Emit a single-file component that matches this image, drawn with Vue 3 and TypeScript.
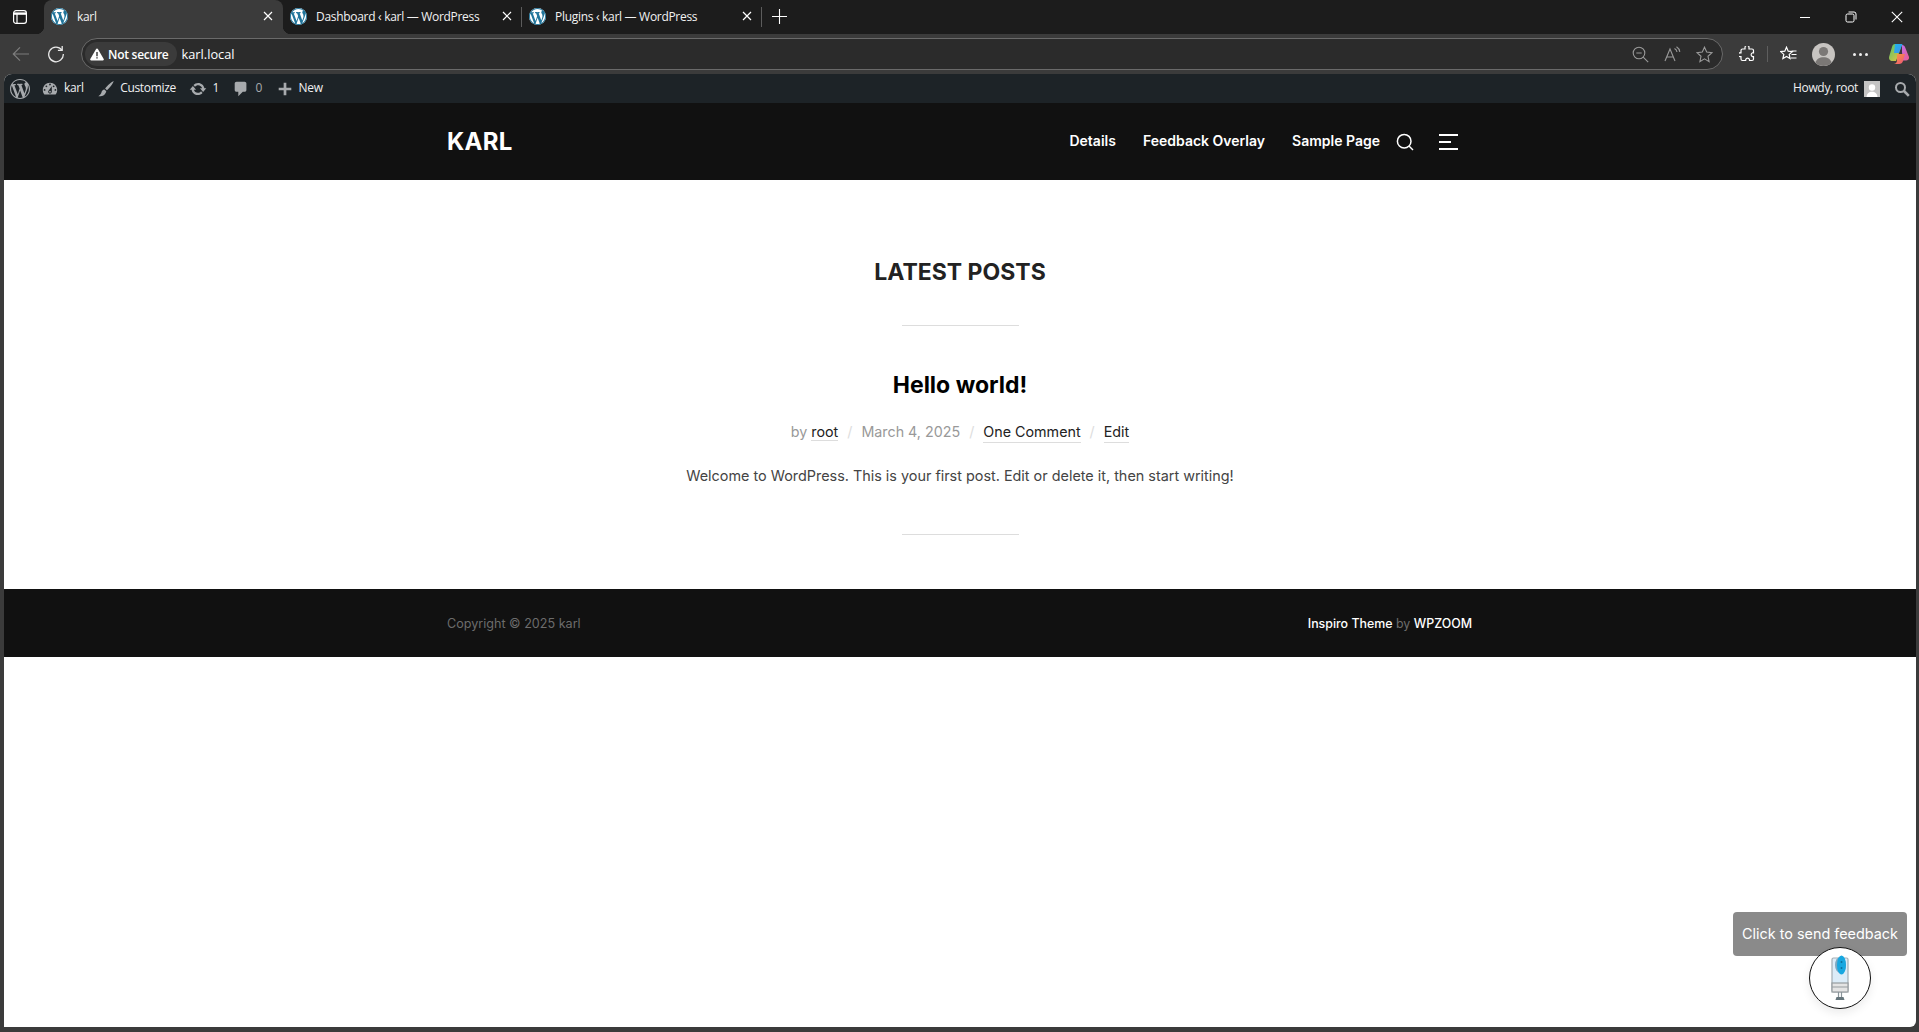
<template>
  <div class="browser">
    <div class="tabstrip">
      <div class="sidebar-btn">
        <svg width="16" height="16" viewBox="0 0 16 16" fill="none" stroke="#fff" stroke-width="1.2">
          <rect x="1.6" y="1.6" width="12.8" height="12.8" rx="2.4" />
          <path d="M2 4.600h12" stroke-width="2.4" />
          <path d="M5 5v9" />
        </svg>
      </div>
      <div v-for="(tab, i) in tabs" :key="tab.title" class="tab" :class="{ active: i === 0 }">
        <svg class="tab-logo" width="17" height="17" viewBox="0 0 20 20">
          <circle cx="10" cy="10" r="10" fill="#fff" />
          <path :d="wpLogo" fill="#21759b" />
        </svg>
        <span class="tab-title">{{ tab.title }}</span>
        <svg class="tab-close" width="10" height="10" viewBox="0 0 10 10" stroke="#fff" stroke-width="1.2">
          <path d="M1 1l8 8M9 1l-8 8" />
        </svg>
      </div>
      <div class="new-tab">
        <svg width="15" height="15" viewBox="0 0 15 15" stroke="#fff" stroke-width="1.1">
          <path d="M7.500 0v15M0 7.500h15" />
        </svg>
      </div>
      <div class="win-controls">
        <div class="win-btn">
          <svg width="12" height="12" viewBox="0 0 12 12" stroke="#fff" stroke-width="1"><path d="M1 6.500h10" /></svg>
        </div>
        <div class="win-btn">
          <svg width="12" height="12" viewBox="0 0 12 12" fill="none" stroke="#fff" stroke-width="1">
            <rect x="1" y="3" width="8" height="8" rx="1.500" />
            <path d="M3.500 1h5.500a2 2 0 0 1 2 2v5.500" />
          </svg>
        </div>
        <div class="win-btn">
          <svg width="12" height="12" viewBox="0 0 12 12" stroke="#fff" stroke-width="1.100"><path d="M.8.8l10.400 10.400M11.200.8L.8 11.200" /></svg>
        </div>
      </div>
    </div>

    <div class="toolbar">
      <svg class="back" width="18" height="16" viewBox="0 0 18 16" fill="none" stroke="#7d7d7d" stroke-width="1.200">
        <path d="M17 8H1.500M8 1.300L1.300 8 8 14.700" />
      </svg>
      <svg class="reload" width="18" height="18" viewBox="0 0 18 18" fill="none" stroke="#e8e8e8" stroke-width="1.300">
        <path d="M14.800 5A7.300 7.300 0 1 0 16.300 9" />
        <path d="M15.200 1v4.300h-4.300" />
      </svg>
      <div class="addressbar">
        <div class="secure-chip">
          <svg width="14" height="13" viewBox="0 0 14 13">
            <path d="M7 .5a1 1 0 0 1 .9.5l5.800 10a1 1 0 0 1-.9 1.500H1.200a1 1 0 0 1-.9-1.500L6.100 1A1 1 0 0 1 7 .5z" fill="#fff" />
            <path d="M6.300 4h1.400v4.200H6.300zM6.300 9.200h1.400v1.400H6.300z" fill="#333" />
          </svg>
          <span>Not secure</span>
        </div>
        <span class="url">karl.local</span>
        <div class="addr-icons">
          <svg width="17" height="17" viewBox="0 0 17 17" fill="none" stroke="#9a9a9a" stroke-width="1.100">
            <circle cx="7" cy="7" r="5.800" />
            <path d="M4.300 7h5.400M11.200 11.200l5 5" />
          </svg>
          <svg width="17" height="16" viewBox="0 0 17 16" fill="none" stroke="#9a9a9a" stroke-width="1.100">
            <path d="M1 15L6 3l5 12M2.800 11h6.400M10.500 2.500a5 5 0 0 1 2.500 3.500M12.500 .8a7 7 0 0 1 3.300 5" />
          </svg>
          <svg width="17" height="17" viewBox="0 0 17 17" fill="none" stroke="#9a9a9a" stroke-width="1.100">
            <path d="M8.500 1.200l2.200 4.900 5.300.6-4 3.600 1.100 5.300-4.600-2.700-4.600 2.700 1.100-5.300-4-3.600 5.300-.6z" />
          </svg>
        </div>
      </div>
      <div class="tool-icons">
        <svg width="16" height="16" viewBox="0 0 16 16" fill="none" stroke="#fff" stroke-width="1.200">
          <path d="M6 1.500a2 2 0 0 1 4 0V3h3a1.500 1.500 0 0 1 1.500 1.500v2.300h-1a2 2 0 0 0 0 3.800h1v2.400a1.500 1.500 0 0 1-1.500 1.500h-2.500v-1a2 2 0 0 0-3.800 0v1H3.500A1.500 1.500 0 0 1 2 13V10.600H1a1.900 1.900 0 0 1 0-3.800h1V4.500A1.500 1.500 0 0 1 3.500 3H6z" />
        </svg>
        <span class="tool-sep"></span>
        <svg width="17" height="16" viewBox="0 0 17 16" fill="none" stroke="#fff" stroke-width="1.200">
          <path d="M6.500 1.200l1.700 4 4.200.4-3.200 2.800.9 4.200-3.600-2.200-3.600 2.200.9-4.200L.6 5.600l4.200-.4z" />
          <path d="M11.500 5h5M11.500 8.500h5M11 12h5.500" />
        </svg>
        <svg class="profile" width="23" height="23" viewBox="0 0 23 23">
          <circle cx="11.500" cy="11.500" r="11.500" fill="#c7c4c1" />
          <circle cx="11.500" cy="8.500" r="4.600" fill="#7b7876" />
          <path d="M3.500 19.700c1-4 4-5.500 8-5.500s7 1.500 8 5.500a11.500 11.500 0 0 1-16 0z" fill="#7b7876" />
        </svg>
        <span class="dots"><i></i><i></i><i></i></span>
        <svg class="copilot" width="22" height="22" viewBox="0 0 22 22">
          <defs>
            <linearGradient id="cpa" x1="0" y1="0" x2="1" y2="1">
              <stop offset="0" stop-color="#1fb6e8" />
              <stop offset="1" stop-color="#3f8ef0" />
            </linearGradient>
            <linearGradient id="cpb" x1="0" y1="0" x2="1" y2="1">
              <stop offset="0" stop-color="#c06ee8" />
              <stop offset="1" stop-color="#f05a8a" />
            </linearGradient>
            <linearGradient id="cpc" x1="0" y1="0" x2="1" y2="1">
              <stop offset="0" stop-color="#52c46a" />
              <stop offset="1" stop-color="#f3c23c" />
            </linearGradient>
            <linearGradient id="cpd" x1="0" y1="0" x2="1" y2="1">
              <stop offset="0" stop-color="#f7a13c" />
              <stop offset="1" stop-color="#f0507a" />
            </linearGradient>
          </defs>
          <path d="M7 1h7l-3 9-3 8H4.500C2 18 .5 16 1.200 13.500L4 4c.4-1.800 1.500-3 3-3z" fill="url(#cpc)" />
          <path d="M7 1h7.500L11 10H6z" fill="url(#cpa)" />
          <path d="M14 2c1.600 0 2.800 1 3.200 2.500L21 14c.4 2-1 3.500-3 3.500h-3L14 9z" fill="url(#cpb)" />
          <path d="M9 11h8l-2 7c-.5 2-2 3-4 3H5.500c2 0 3-1 3.500-3z" fill="url(#cpd)" />
        </svg>
      </div>
    </div>

    <div class="viewport">
      <div class="adminbar">
        <div class="admin-left">
          <svg class="admin-wp" width="20" height="20" viewBox="0 0 20 20"><path :d="wpLogo" fill="#a7aaad" /></svg>
          <div v-for="item in adminItems" :key="item.label" class="admin-item">
            <svg width="18" height="18" viewBox="0 0 20 20" fill="#a7aaad"><path :d="item.icon" /></svg>
            <span :class="{ muted: item.muted }">{{ item.label }}</span>
          </div>
        </div>
        <div class="admin-right">
          <span>Howdy, root</span>
          <svg class="avatar" width="16" height="16" viewBox="0 0 16 16">
            <rect width="16" height="16" fill="#c4c4c4" />
            <circle cx="8" cy="6.500" r="3.200" fill="#fff" />
            <path d="M2.500 16c.5-3.800 2.500-5.200 5.500-5.200s5 1.400 5.500 5.200z" fill="#fff" />
          </svg>
          <svg width="16" height="16" viewBox="0 0 16 16" fill="none" stroke="#a7aaad" stroke-width="2">
            <circle cx="6.500" cy="6.500" r="4.500" />
            <path d="M10 10l4.800 4.800" stroke-width="2.600" />
          </svg>
        </div>
      </div>

      <header class="site-header">
        <div class="site-inner">
          <div class="site-title">KARL</div>
          <nav class="site-nav">
            <a v-for="link in navLinks" :key="link">{{ link }}</a>
          </nav>
          <svg class="nav-search" width="18" height="18" viewBox="0 0 18 18" fill="none" stroke="#fff" stroke-width="1.500">
            <circle cx="8.200" cy="8.200" r="6.800" />
            <path d="M13 13l4 4" />
          </svg>
          <div class="nav-burger"><i></i><i class="short"></i><i></i></div>
        </div>
      </header>

      <main class="content">
        <h2 class="section-title">LATEST POSTS</h2>
        <div class="rule first"></div>
        <h3 class="post-title">Hello world!</h3>
        <div class="post-meta">
          <span>by <a>root</a></span>
          <span class="slash">/</span>
          <span>March 4, 2025</span>
          <span class="slash">/</span>
          <a>One Comment</a>
          <span class="slash">/</span>
          <a>Edit</a>
        </div>
        <p class="post-text">Welcome to WordPress. This is your first post. Edit or delete it, then start writing!</p>
        <div class="rule last"></div>
      </main>

      <footer class="site-footer">
        <div class="footer-inner">
          <span class="copyright">Copyright © 2025 karl</span>
          <span class="credit"><b>Inspiro Theme</b> by <b>WPZOOM</b></span>
        </div>
      </footer>

      <div class="page-rest"></div>

      <div class="feedback-tip">Click to send feedback</div>
      <div class="feedback-btn">
        <svg width="24" height="46" viewBox="0 0 24 46">
          <rect x="4" y="3" width="16" height="34" rx="1.500" fill="#dcecf8" stroke="#a3adb4" stroke-width="1.200" />
          <rect x="4" y="28" width="16" height="9" fill="#e4e4e4" stroke="#969c9f" stroke-width="1.200" />
          <path d="M4 32h16" stroke="#969c9f" stroke-width="1" />
          <path d="M10.500 37v5M13.500 37v5" stroke="#8a959a" stroke-width="1.200" />
          <path d="M8.500 42h7l1 3h-9z" fill="#66767c" />
          <ellipse cx="12.500" cy="10" rx="5.500" ry="8" fill="#7da9c2" />
          <ellipse cx="13.500" cy="10" rx="4.500" ry="9.500" fill="#18a7e0" />
          <circle cx="13.500" cy="7" r="1" fill="#0b6f9c" />
          <circle cx="13.500" cy="13" r="1" fill="#0b6f9c" />
        </svg>
      </div>
    </div>
  </div>
</template>

<script setup lang="ts">
const wpLogo =
  'M20 10c0-5.510-4.490-10-10-10C4.480 0 0 4.490 0 10c0 5.520 4.480 10 10 10 5.510 0 10-4.480 10-10zM7.780 15.370L4.370 6.220c.55-.02 1.170-.08 1.170-.08.5-.06.44-1.130-.06-1.110 0 0-1.450.11-2.370.11-.18 0-.37 0-.58-.01C4.120 2.690 6.870 1.110 10 1.110c2.330 0 4.450.87 6.050 2.340-.68-.11-1.650.39-1.650 1.580 0 .74.45 1.360.9 2.100.35.61.55 1.360.55 2.460 0 1.490-1.400 5-1.400 5l-3.030-8.370c.54-.02.82-.17.82-.17.5-.05.44-1.250-.06-1.220 0 0-1.440.12-2.380.12-.87 0-2.330-.12-2.330-.12-.5-.03-.56 1.200-.06 1.220l.92.08 1.260 3.410zM17.410 10c.24-.64.74-1.870.43-4.250.7 1.290 1.050 2.710 1.050 4.250 0 3.290-1.730 6.240-4.400 7.780.97-2.590 1.940-5.200 2.920-7.780zM6.100 18.090C3.120 16.650 1.110 13.530 1.110 10c0-1.300.23-2.480.72-3.590C3.250 10.300 4.670 14.200 6.100 18.090zm4.030-6.630l2.580 6.980c-.86.29-1.760.45-2.710.45-.79 0-1.570-.11-2.290-.33.81-2.380 1.620-4.740 2.420-7.100z'

const tabs = [
  { title: 'karl' },
  { title: 'Dashboard ‹ karl — WordPress' },
  { title: 'Plugins ‹ karl — WordPress' },
]

const adminItems = [
  {
    label: 'karl',
    icon: 'M3.760 16h12.480c1.100-1.370 1.760-3.110 1.760-5 0-4.420-3.580-8-8-8s-8 3.580-8 8c0 1.890.66 3.630 1.760 5zM10 4c.55 0 1 .45 1 1s-.45 1-1 1-1-.45-1-1 .45-1 1-1zM6 6c.55 0 1 .45 1 1s-.45 1-1 1-1-.45-1-1 .45-1 1-1zm8 0c.55 0 1 .45 1 1s-.45 1-1 1-1-.45-1-1 .45-1 1-1zm-5.370 5.550L12 7v6c0 1.100-.9 2-2 2s-2-.9-2-2c0-.57.24-1.080.63-1.450zM4 10c.55 0 1 .45 1 1s-.45 1-1 1-1-.45-1-1 .45-1 1-1zm12 0c.55 0 1 .45 1 1s-.45 1-1 1-1-.45-1-1 .45-1 1-1zm-5 3c0-.55-.45-1-1-1s-1 .45-1 1 .45 1 1 1 1-.45 1-1z',
  },
  {
    label: 'Customize',
    icon: 'M18.500 1c-2 .8-6.500 4.300-9.500 8.500l2 2c3.500-3.200 7-8 7.500-10.500zM8.300 10.500c-2 .3-3 1.500-3.300 3-.3 1.700-1.500 3-3.500 4.500 3.500.6 7.800-.8 8.800-5.500z',
  },
  {
    label: '1',
    icon: 'M10.200 3.280c3.530 0 6.430 2.610 6.920 6h2.080l-3.500 4-3.500-4h2.320c-.45-1.970-2.210-3.440-4.320-3.440-1.450 0-2.730.71-3.540 1.780L4.950 5.660C6.230 4.200 8.110 3.280 10.200 3.280zm-.4 13.440c-3.520 0-6.430-2.610-6.920-6H.8l3.500-4c1.170 1.330 2.330 2.670 3.500 4H5.480c.45 1.970 2.210 3.440 4.320 3.440 1.450 0 2.730-.71 3.540-1.780l1.710 1.950c-1.280 1.460-3.150 2.390-5.250 2.390z',
  },
  {
    label: '0',
    muted: true,
    icon: 'M5 2h9c1.100 0 2 .9 2 2v7c0 1.100-.9 2-2 2h-2l-5 5v-5H5c-1.100 0-2-.9-2-2V4c0-1.100.9-2 2-2z',
  },
  {
    label: 'New',
    icon: 'M17 8.500v3h-5.500V17h-3v-5.500H3v-3h5.500V3h3v5.500z',
  },
]

const navLinks = ['Details', 'Feedback Overlay', 'Sample Page']
</script>

<style>
html,
body {
  margin: 0;
  height: 100%;
  overflow: hidden;
  background: #3b3b3b;
}
</style>

<style scoped>
.browser {
  height: 100vh;
  display: flex;
  flex-direction: column;
  background: #3b3b3b;
  font-family: 'Open Sans', 'Liberation Sans', sans-serif;
}

.tabstrip {
  height: 34px;
  flex: none;
  display: flex;
  background: #1c1c1c;
}

.sidebar-btn {
  width: 44px;
  flex: none;
  padding: 8px 0 0 12px;
  box-sizing: border-box;
}

.tab {
  position: relative;
  width: 239px;
  flex: none;
  box-sizing: border-box;
  display: flex;
  align-items: center;
  padding: 0 10px 2px 7px;
  color: #f2f2f2;
  font-size: 12px;
  letter-spacing: -0.3px;
}

.tab:nth-child(4) {
  width: 240px;
}

.tab:not(.active)::after {
  content: '';
  position: absolute;
  right: 0;
  top: 7px;
  width: 1px;
  height: 20px;
  background: #5c5c5c;
}

.tab.active {
  background: #3b3b3b;
  border-radius: 8px 8px 0 0;
}

.tab.active::before,
.tab.active::after {
  content: '';
  position: absolute;
  bottom: 0;
  width: 8px;
  height: 8px;
}

.tab.active::before {
  left: -8px;
  background: radial-gradient(circle at 0 0, transparent 8px, #3b3b3b 8.500px);
}

.tab.active::after {
  right: -8px;
  background: radial-gradient(circle at 100% 0, transparent 8px, #3b3b3b 8.500px);
}

.tab-logo {
  flex: none;
}

.tab-title {
  margin-left: 9px;
  white-space: nowrap;
}

.tab-close {
  margin-left: auto;
  flex: none;
}

.new-tab {
  padding: 7px 0 0 10px;
}

.win-controls {
  margin-left: auto;
  display: flex;
  transform: translateX(1px);
}

.win-btn {
  width: 46px;
  display: flex;
  align-items: center;
  justify-content: center;
}

.toolbar {
  height: 40px;
  flex: none;
  box-sizing: border-box;
  display: flex;
  align-items: center;
  padding: 0 0 0 12px;
}

.reload {
  margin-left: 17px;
}

.addressbar {
  margin-left: 16px;
  width: 1642px;
  height: 32px;
  box-sizing: border-box;
  border: 1px solid #6a6a6a;
  border-radius: 16px;
  background: #2b2b2b;
  display: flex;
  align-items: center;
  padding: 0 9px 0 3px;
}

.secure-chip {
  height: 24px;
  padding: 0 8px 0 5px;
  border-radius: 12px;
  background: #3b3b3b;
  display: flex;
  align-items: center;
  gap: 4px;
  color: #fff;
  font-size: 12px;
  font-weight: 600;
  letter-spacing: -0.25px;
}

.url {
  margin-left: 5px;
  color: #fff;
  font-size: 12.800px;
}

.addr-icons {
  margin-left: auto;
  display: flex;
  align-items: center;
  gap: 15px;
}

.tool-icons {
  display: flex;
  align-items: center;
  margin-left: 16px;
}

.tool-sep {
  width: 1px;
  height: 16px;
  background: #5e5e5e;
  margin: 0 12px;
}

.profile {
  margin-left: 15px;
}

.dots {
  margin-left: 18px;
  display: flex;
  gap: 3px;
}

.dots i {
  width: 3px;
  height: 3px;
  border-radius: 50%;
  background: #f0f0f0;
}

.copilot {
  margin-left: 20px;
}

.viewport {
  position: relative;
  flex: 1;
  margin: 0 3px 5px 4px;
  min-height: 0;
  display: flex;
  flex-direction: column;
  background: #fff;
  border-radius: 8px 8px 6px 0;
  overflow: hidden;
}

.adminbar {
  height: 29px;
  flex: none;
  display: flex;
  align-items: center;
  justify-content: space-between;
  background: #1d2327;
  color: #f0f0f1;
  font-size: 12px;
  letter-spacing: -0.32px;
  padding: 0 6px;
}

.admin-left {
  display: flex;
  align-items: center;
}

.admin-wp {
  margin-right: 11px;
}

.admin-item {
  display: flex;
  align-items: center;
  margin-right: 13.500px;
  gap: 5px;
}

.admin-item span,
.admin-right span {
  margin-bottom: 2px;
}

.muted {
  color: #a7aaad;
}

.admin-right {
  display: flex;
  align-items: center;
}

.avatar {
  margin: 0 14px 0 6px;
}

.site-header {
  height: 77px;
  flex: none;
  background: #111;
  color: #fff;
}

.site-inner {
  height: 100%;
  padding-left: 443px;
  padding-right: 458px;
  display: flex;
  align-items: center;
  font-family: Inter, 'Liberation Sans', sans-serif;
}

.site-title {
  font-size: 24px;
  font-weight: 700;
  letter-spacing: 0.3px;
}

.site-nav {
  margin-left: auto;
  display: flex;
  gap: 27px;
  font-size: 14px;
  font-weight: 600;
  margin-bottom: 2px;
}

.nav-search {
  margin-left: 16px;
}

.nav-burger {
  margin-left: 25px;
  width: 19px;
  display: flex;
  flex-direction: column;
  gap: 5px;
}

.nav-burger i {
  height: 2px;
  background: #fff;
}

.nav-burger i.short {
  width: 12px;
}

.content {
  height: 409px;
  flex: none;
  box-sizing: border-box;
  padding-top: 78px;
  display: flex;
  flex-direction: column;
  align-items: center;
  font-family: Inter, 'Liberation Sans', sans-serif;
}

.section-title {
  margin: 0;
  font-size: 23px;
  line-height: 28px;
  font-weight: 700;
  color: #222;
}

.rule {
  width: 117px;
  height: 1px;
  background: #ddd;
}

.rule.first {
  margin-top: 39px;
}

.post-title {
  margin: 45px 0 0;
  font-size: 23px;
  line-height: 28px;
  font-weight: 700;
  color: #000;
}

.post-meta {
  margin-top: 23px;
  display: flex;
  font-size: 14.300px;
  line-height: 20px;
  color: #999;
}

.post-meta a {
  color: #222;
  border-bottom: 1px solid #ddd;
}

.slash {
  color: #ddd;
  margin: 0 9px;
}

.post-text {
  margin: 23px 0 0;
  font-size: 14.400px;
  line-height: 20px;
  color: #444;
}

.rule.last {
  margin-top: 48px;
}

.site-footer {
  height: 68px;
  flex: none;
  background: #111;
  font-family: Inter, 'Liberation Sans', sans-serif;
  font-size: 12.600px;
  color: #6c6c6c;
}

.footer-inner {
  height: 100%;
  padding: 0 444px 0 443px;
  display: flex;
  align-items: center;
  justify-content: space-between;
}

.credit {
  font-size: 12.400px;
}

.credit b {
  font-weight: 500;
  color: #fff;
}

.page-rest {
  flex: 1;
}

.feedback-tip {
  position: absolute;
  right: 9px;
  bottom: 71px;
  width: 174px;
  height: 44px;
  box-sizing: border-box;
  border-radius: 4px;
  background: #8a8a8a;
  color: #fff;
  font-family: Inter, 'Liberation Sans', sans-serif;
  font-size: 14.400px;
  line-height: 44px;
  text-align: center;
}

.feedback-btn {
  position: absolute;
  right: 45px;
  bottom: 18px;
  width: 62px;
  height: 62px;
  box-sizing: border-box;
  border: 1.500px solid #111;
  border-radius: 50%;
  background: #fff;
  box-shadow: 0 4px 10px rgba(0, 0, 0, 0.08);
  display: flex;
  align-items: center;
  justify-content: center;
}
</style>
